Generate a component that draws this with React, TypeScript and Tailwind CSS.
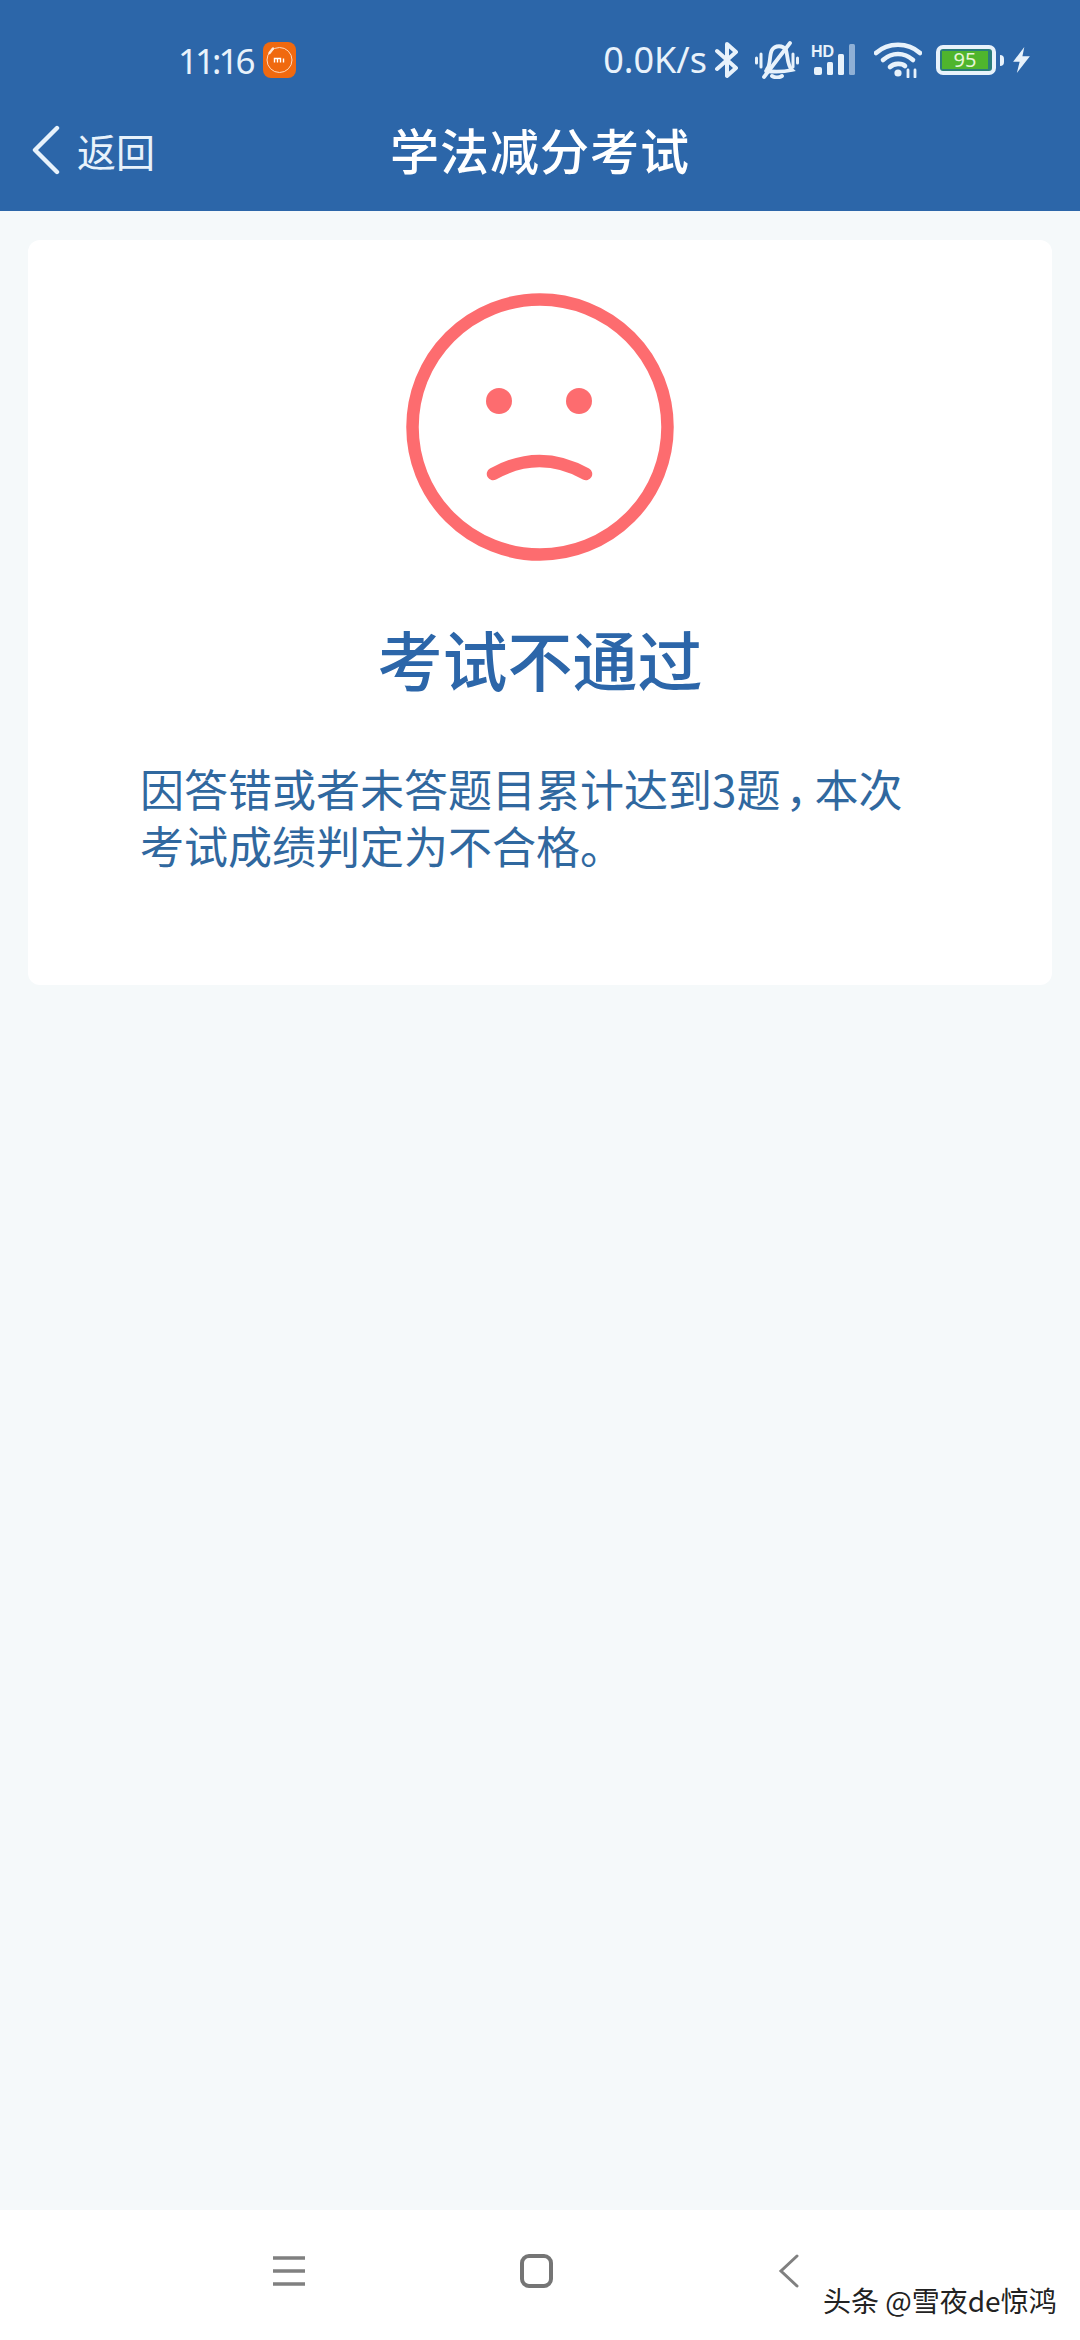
const cjk = "font-['Noto_Sans_CJK_SC','Noto_Sans',sans-serif]";

function MiBadge() {
  return (
    <svg width="33" height="36" viewBox="0 0 33 36" className="ml-[11px]">
      <rect width="33" height="36" rx="8" fill="#f0690f" />
      <circle cx="16.5" cy="18" r="12.5" fill="none" stroke="#ffd9bd" strokeWidth="1" />
      <path d="M6.5 11 L10 6.5" stroke="#ffe6d4" strokeWidth="2.5" strokeLinecap="round" />
      <path d="M11.5 20.5 v-4 h3 v4 M14.5 16.5 h3 v4 M20.5 16.5 v4" fill="none" stroke="#fff" strokeWidth="1.4" />
    </svg>
  );
}

function StatusIcons() {
  return (
    <div className="flex items-center text-[#e8f2fb]">
      <svg width="24" height="38" viewBox="0 0 24 38" fill="none" stroke="currentColor" strokeWidth="4" className="ml-[8px]">
        <path d="M2 10 L21 27 L12 35 V3 L21 11 L2 28" strokeLinejoin="round" strokeLinecap="round" />
      </svg>
      <svg width="44" height="38" viewBox="0 0 44 38" fill="none" stroke="currentColor" strokeWidth="3.8" strokeLinecap="round" className="ml-[16px]">
        <path d="M12 28 C16 24 14 14 17 9 C20 4 28 4 31 9 C33 15 32 24 37 29 C28 31 20 31 11 30" />
        <path d="M17 35 Q22 38 27 35" strokeWidth="3.8" />
        <path d="M9 36 L35 2" />
        <path d="M1.5 17 V22 M6 13 V26 M38 13 V26 M42.5 17 V22" strokeWidth="3" />
      </svg>
      <svg width="50" height="32" viewBox="0 0 50 32" className="ml-[12px]">
        <text x="0" y="13" fontSize="16" fontWeight="700" fill="currentColor" fontFamily="Liberation Sans, sans-serif">HD</text>
        <rect x="3" y="23" width="8" height="8" rx="2" fill="currentColor" />
        <rect x="16" y="18" width="6" height="13" rx="1.5" fill="currentColor" />
        <rect x="27" y="10" width="6" height="21" rx="1.5" fill="currentColor" />
        <rect x="38" y="0" width="6" height="31" rx="1.5" fill="#8fb0d6" />
      </svg>
      <svg width="48" height="36" viewBox="0 0 48 36" fill="none" stroke="currentColor" strokeWidth="4.6" strokeLinecap="round" className="ml-[13px]">
        <path d="M2 11 C14 0 34 0 46 11" />
        <path d="M9 18 C18 10 30 10 39 18" />
        <path d="M16 25 C20 21 28 21 31 24" />
        <circle cx="24" cy="31" r="3.6" fill="currentColor" stroke="none" />
        <path d="M34 28 V35 M41 28 V35" strokeWidth="2.8" />
      </svg>
      <div className="ml-[14px] flex items-center">
        <div className="flex h-[30px] w-[60px] items-center rounded-[7px] border-[4px] border-[#e8f2fb] bg-[#2a7d7a] p-[2px]">
          <div className="flex h-full w-[46px] items-center justify-center bg-[#4fb52d] text-[20px] leading-none text-[#e6f5d8] font-['Noto_Sans',sans-serif]">
            95
          </div>
        </div>
        <div className="ml-[4px] h-[11px] w-[4px] rounded-r-sm bg-[#e8f2fb]" />
      </div>
      <svg width="19" height="28" viewBox="0 0 20 30" fill="currentColor" className="ml-[8px]">
        <path d="M13 1 L1 17 H8 L5 29 L19 11 H11 Z" />
      </svg>
    </div>
  );
}

function SadFace() {
  return (
    <svg width="268" height="268" viewBox="0 0 268 268" fill="none" stroke="#fd6c6f">
      <circle cx="134" cy="134" r="127.5" strokeWidth="12.5" />
      <circle cx="93" cy="108" r="13" fill="#fd6c6f" stroke="none" />
      <circle cx="173" cy="108" r="13" fill="#fd6c6f" stroke="none" />
      <path d="M87 181 Q133.5 155 180 181" strokeWidth="12.5" strokeLinecap="round" />
    </svg>
  );
}

function BottomNav() {
  return (
    <div className="relative flex h-[130px] w-full items-start bg-white pl-[273px] pt-[44px]">
      <svg width="32" height="32" viewBox="0 0 32 32" fill="none" stroke="#808080" strokeWidth="3.4" className="mt-[1px]">
        <path d="M0 3 H32 M0 16 H32 M0 29 H32" />
      </svg>
      <svg width="33" height="34" viewBox="0 0 33 34" fill="none" stroke="#757575" strokeWidth="4" className="ml-[215px]">
        <rect x="2" y="2" width="29" height="30" rx="7" />
      </svg>
      <svg width="22" height="34" viewBox="0 0 22 34" fill="none" stroke="#808080" strokeWidth="3" strokeLinecap="round" className="ml-[225px]">
        <path d="M19 2 L3 17 L19 32" />
      </svg>
      <span className={`absolute left-[823px] top-[70px] text-[28px] leading-[40px] text-[#222] whitespace-nowrap ${cjk}`}>
        头条 @雪夜de惊鸿
      </span>
    </div>
  );
}

export default function App() {
  return (
    <div className={`flex h-[2340px] w-[1080px] flex-col bg-[#f5f9fa] ${cjk}`}>
      <header className="h-[211px] w-full bg-[#2c66a9] text-white">
        <div className="flex h-[118px] items-center pl-[178px] pr-[49px] pt-[2px]">
          <span className="text-[35px] leading-none tracking-[-3px] text-[#e8f2fb] font-['Noto_Sans',sans-serif]">11:16</span>
          <MiBadge />
          <div className="ml-auto flex items-center">
            <span className="text-[36px] leading-none text-[#e8f2fb] font-['Noto_Sans',sans-serif]">0.0K/s</span>
            <StatusIcons />
          </div>
        </div>
        <div className="relative flex h-[93px] items-start justify-center">
          <div className="absolute left-[32px] top-[5px] flex items-center">
            <svg width="28" height="50" viewBox="0 0 28 50" fill="none" stroke="#e8f2fb" strokeWidth="4.4" strokeLinecap="round" strokeLinejoin="round">
              <path d="M25 3 L3 25 L25 47" />
            </svg>
            <span className="ml-[17px] text-[39px] leading-[54px] text-[#e8f2fb]">返回</span>
          </div>
          <h1 className="-mt-[3px] text-[49px] leading-[68px] font-medium tracking-[1px]">学法减分考试</h1>
        </div>
      </header>

      <main className="flex-1 px-[28px] pt-[29px]">
        <section className="flex h-[745px] flex-col items-center rounded-[12px] bg-white pt-[53px]">
          <SadFace />
          <h2 className="mt-[52px] text-[65px] leading-[90px] font-medium text-[#2c66a9]">考试不通过</h2>
          <p className="mt-[57px] ml-[112px] self-start whitespace-nowrap text-[44px] leading-[57px] text-[#30689f]">
            因答错或者未答题目累计达到3题<span className="ml-[8px] mr-[4px] [font-feature-settings:'palt']">，</span>本次
            <br />
            考试成绩判定为不合格。
          </p>
        </section>
      </main>

      <BottomNav />
    </div>
  );
}
